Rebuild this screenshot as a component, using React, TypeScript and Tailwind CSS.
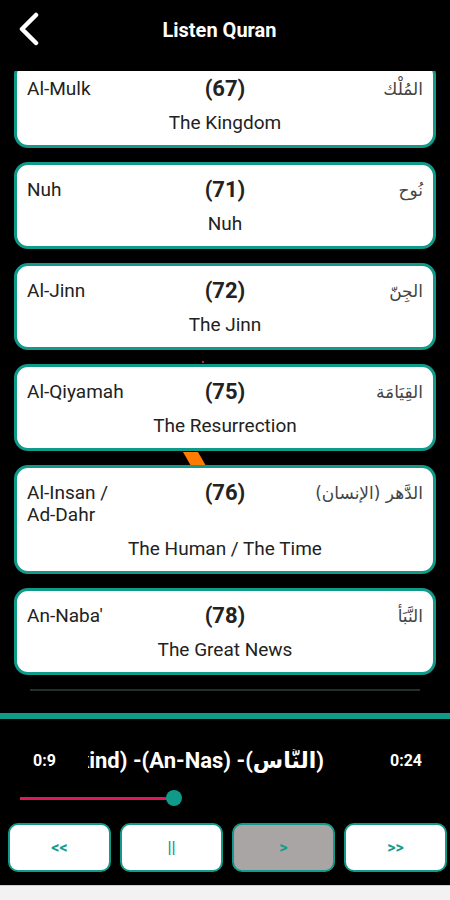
const surahs = [
  { name: "Al-Mulk", num: 67, ar: "المُلْك", en: "The Kingdom" },
  { name: "Nuh", num: 71, ar: "نُوح", en: "Nuh" },
  { name: "Al-Jinn", num: 72, ar: "الجِنّ", en: "The Jinn" },
  { name: "Al-Qiyamah", num: 75, ar: "القِيَامَة", en: "The Resurrection" },
  { name: "Al-Insan / Ad-Dahr", num: 76, ar: "الدَّهر (الإنسان)", en: "The Human / The Time" },
  { name: "An-Naba'", num: 78, ar: "النَّبَأ", en: "The Great News" },
];

const SurahCard = ({ s }: { s: (typeof surahs)[number] }) => (
  <div className="relative z-10 mx-[14px] mb-[14px] rounded-[14px] border-[3px] border-[#0f9a89] bg-white px-[10px] pt-[14px] pb-[9px] text-[#222]">
    <div className="grid grid-cols-3 items-start">
      <p className="text-[19px] leading-[22px]">
        {/* keep hyphenated words together so "Ad-Dahr" wraps whole */}
        {s.name.split(" ").map((w, i) => (
          <span key={i}>
            {i > 0 ? " " : ""}
            <span className="whitespace-nowrap">{w}</span>
          </span>
        ))}
      </p>
      <p className="text-center text-[22px] font-bold leading-[22px]">({s.num})</p>
      <p
        dir="rtl"
        className="text-right text-[17px] leading-[22px] text-[#444]"
        style={{ fontFamily: '"DejaVu Sans", sans-serif' }}
      >
        {s.ar}
      </p>
    </div>
    <p className="mt-[10px] text-center text-[19px] leading-[26px]">{s.en}</p>
  </div>
);

const CtrlButton = ({ label, gray }: { label: string; gray?: boolean }) => (
  <button
    className={
      "flex h-[49px] flex-1 items-center justify-center rounded-[10px] border-2 border-[#0f9a89] text-[16px] font-bold text-[#129a8a] " +
      (gray ? "bg-[#a9a5a5]" : "bg-white")
    }
  >
    {label}
  </button>
);

export default function App() {
  return (
    <div
      className="flex h-[900px] w-[450px] flex-col overflow-hidden bg-black"
      style={{ fontFamily: "Roboto, 'DejaVu Sans', sans-serif" }}
    >
      {/* header */}
      <div className="relative flex h-[71px] shrink-0 items-start justify-center pt-[17px]">
        <svg className="absolute left-[17px] top-[12px]" width="24" height="34" viewBox="0 0 24 34">
          <polyline
            points="19,3 5,17 19,31"
            fill="none"
            stroke="white"
            strokeWidth="4.5"
            strokeLinecap="round"
            strokeLinejoin="round"
          />
        </svg>
        <h1 className="mr-[11px] text-[20px] font-bold leading-[26px] text-white">Listen Quran</h1>
      </div>

      {/* list */}
      <div className="relative h-[642px] shrink-0 overflow-hidden">
        <svg className="absolute left-0 top-0 z-0" width="450" height="642">
          <circle cx="203" cy="291" r="1.2" fill="#c0203a" />
          <polygon points="183,381 198,381 206,395 191,395" fill="#ff7a00" />
        </svg>
        <div className="-mt-[10px]">
          {surahs.map((s) => (
            <SurahCard key={s.num} s={s} />
          ))}
          <div className="mx-[30px] h-[2px] bg-[#1f302d]" />
        </div>
      </div>

      <div className="h-[6px] shrink-0 bg-[#0f9a89]" />

      {/* player */}
      <div className="flex h-[166px] shrink-0 flex-col pt-[30px]">
        <div className="flex h-[24px] items-center">
          <span className="ml-[33px] w-[55px] text-[16px] font-bold text-white">0:9</span>
          <div className="flex w-[236px] justify-end overflow-hidden">
            <span className="whitespace-nowrap text-[22px] font-bold leading-[24px] text-white">
              (Mankind) -(An-Nas) -(<bdi>النَّاس</bdi>)
            </span>
          </div>
          <span className="ml-auto mr-[28px] text-[16px] font-bold text-white">0:24</span>
        </div>
        <div className="relative mt-[17px] h-[16px]">
          <div className="absolute left-[20px] top-[7px] h-[3px] w-[154px] bg-[#e0195a]" />
          <div className="absolute left-[166px] top-0 h-[16px] w-[16px] rounded-full bg-[#0f9a89]" />
        </div>
        <div className="mt-[17px] flex gap-[9px] pl-[8px] pr-[3px]">
          <CtrlButton label="<<" />
          <CtrlButton label="||" />
          <CtrlButton label=">" gray />
          <CtrlButton label=">>" />
        </div>
      </div>

      <div className="h-[15px] shrink-0 border-t border-[#cfcfcf] bg-[#f2f2f2]" />
    </div>
  );
}
